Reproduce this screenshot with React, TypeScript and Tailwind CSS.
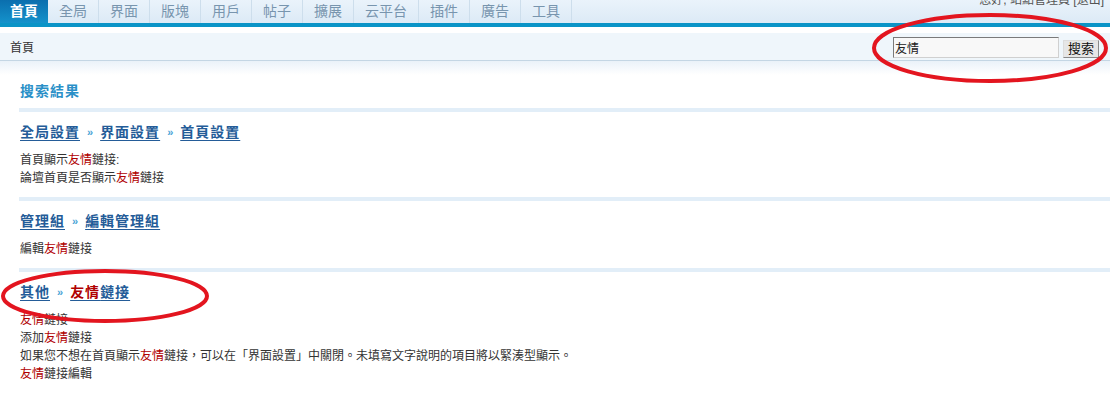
import React from "react";

const tabs = ["全局", "界面", "版塊", "用戶", "帖子", "擴展", "云平台", "插件", "廣告", "工具"];

const Hl = ({ children }: { children: React.ReactNode }) => (
    <span className="text-[#b00000]">{children}</span>
);

const Sep = () => <div className="h-[4px] bg-[#e2eef8]" />;

const Arrow = () => <span className="mx-[7px] text-[11px] font-bold tracking-normal text-[#4aa3d6] no-underline">»</span>;

interface Section {
    crumbs: React.ReactNode[];
    lines: React.ReactNode[];
}

const sections: Section[] = [
    {
        crumbs: ["全局設置", "界面設置", "首頁設置"],
        lines: [
            <>首頁顯示<Hl>友情</Hl>鏈接:</>,
            <>論壇首頁是否顯示<Hl>友情</Hl>鏈接</>,
        ],
    },
    {
        crumbs: ["管理組", "編輯管理組"],
        lines: [<>編輯<Hl>友情</Hl>鏈接</>],
    },
    {
        crumbs: [
            "其他",
            <>
                <Hl>友情</Hl>鏈接
            </>,
        ],
        lines: [
            <><Hl>友情</Hl>鏈接</>,
            <>添加<Hl>友情</Hl>鏈接</>,
            <>如果您不想在首頁顯示<Hl>友情</Hl>鏈接，可以在「界面設置」中關閉。未填寫文字說明的項目將以緊湊型顯示。</>,
            <><Hl>友情</Hl>鏈接編輯</>,
        ],
    },
];

export default function App() {
    return (
        <div
            className="relative h-[397px] w-[1110px] overflow-hidden bg-white text-[12px] text-[#333]"
            style={{ fontFamily: '"Liberation Sans", "Noto Sans CJK TC", sans-serif' }}
        >
            {/* Top nav */}
            <div className="flex h-[23px] bg-gradient-to-b from-[#eaf3fb] to-[#dceaf6]">
                <div className="flex h-[23px] w-[48px] items-center justify-center bg-gradient-to-b from-[#0b6fae] to-[#1592cb] text-[14px] font-bold text-white">
                    首頁
                </div>
                {tabs.map((t) => (
                    <div
                        key={t}
                        className="flex h-[23px] items-center border-r border-[#cddeec] px-[11px] text-[14px] text-[#7895ae]"
                    >
                        {t}
                    </div>
                ))}
                <div className="ml-auto -mt-[9px] pr-[6px] text-[12px] leading-[18px] text-[#555]">
                    您好, 站點管理員 [退出]
                </div>
            </div>
            <div className="h-[4px] bg-[#0a94c7]" />
            <div className="h-[6px] bg-white" />

            {/* Breadcrumb bar */}
            <div className="flex h-[28px] items-center border-b border-[#c4d6e4] bg-[#eff6fb] pl-[10px] pr-[11px]">
                <span className="mt-[2px]">首頁</span>
                <div className="ml-auto mt-[2px] flex items-center gap-[4px]">
                    <input
                        readOnly
                        value="友情"
                        className="h-[21px] w-[166px] border border-t-[#7a7a7a] border-l-[#7a7a7a] border-r-[#d0d0d0] border-b-[#d0d0d0] bg-[#f8f8f8] px-[1px] text-[12px] text-[#222] outline-none"
                    />
                    <button className="mt-[2px] h-[18px] w-[36px] border border-[#8a8a8a] border-t-[#dcdcdc] border-l-[#dcdcdc] bg-[#e6e6e6] text-[13px] leading-[14px] text-[#111]">
                        搜索
                    </button>
                </div>
            </div>

            {/* Content */}
            <div className="bg-gradient-to-b from-[#eaf2f9] to-white to-[14px] bg-no-repeat pl-[19px] pt-[20px]">
                <div className="h-[20px] pl-[1px] text-[14px] font-bold leading-[20px] tracking-[1px] text-[#2a90c8]">搜索結果</div>
                <div className="mt-[7px]" />
                {sections.map((s, i) => (
                    <div key={i}>
                        <Sep />
                        <div className="mt-[10px] flex h-[20px] items-center pl-[1px] text-[14px] font-bold leading-[20px] tracking-[1px] text-[#245c98]">
                            {s.crumbs.map((c, j) => (
                                <React.Fragment key={j}>
                                    {j > 0 && <Arrow />}
                                    <span className="underline underline-offset-[3px]">{c}</span>
                                </React.Fragment>
                            ))}
                        </div>
                        <div className="mb-[10px] mt-[9px] pl-[1px]">
                            {s.lines.map((l, k) => (
                                <div key={k} className="h-[18px] leading-[18px]">
                                    {l}
                                </div>
                            ))}
                        </div>
                    </div>
                ))}
            </div>

            {/* Red annotation marks */}
            <svg className="pointer-events-none absolute left-0 top-0" width="1110" height="397">
                <ellipse cx="990" cy="48" rx="116" ry="33" fill="none" stroke="#e3151f" strokeWidth="4" />
                <ellipse cx="105" cy="296" rx="102" ry="25" fill="none" stroke="#e3151f" strokeWidth="4" />
            </svg>
        </div>
    );
}
